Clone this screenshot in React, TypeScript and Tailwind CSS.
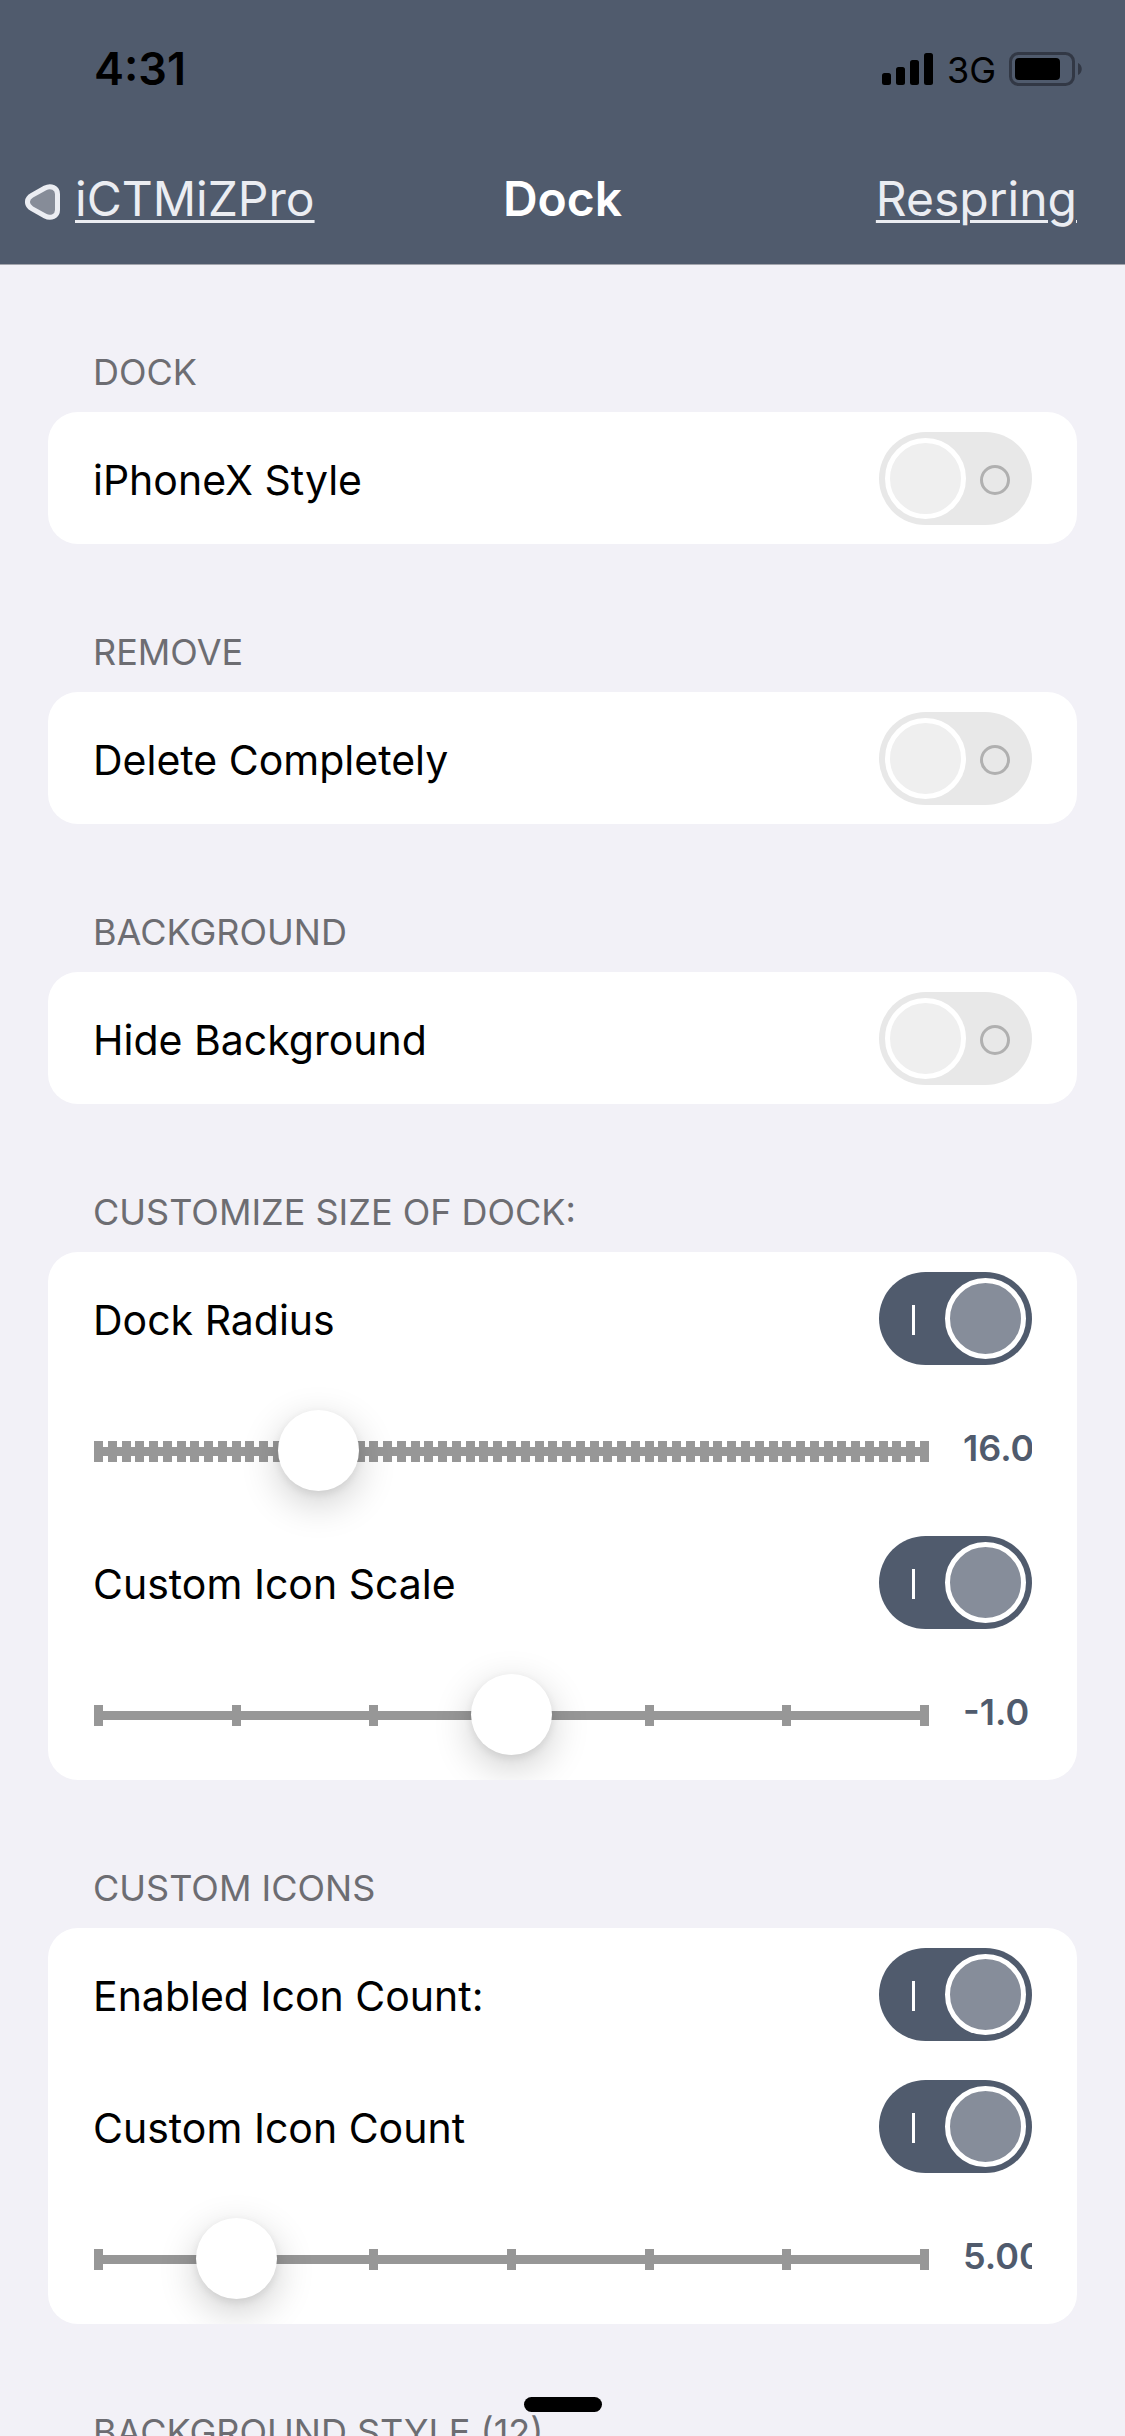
import { useId, useState } from 'react';
import type { ReactNode } from 'react';

function SignalIcon() {
  return (
    <svg width="52" height="34" viewBox="0 0 52 34" aria-hidden="true">
      <rect x="0" y="21" width="9" height="12" rx="2.5" />
      <rect x="14" y="15" width="9" height="18" rx="2.5" />
      <rect x="28" y="8" width="9" height="25" rx="2.5" />
      <rect x="42" y="1" width="9" height="32" rx="2.5" />
    </svg>
  );
}

function BatteryIcon() {
  return (
    <svg width="74" height="34" viewBox="0 0 74 34" aria-hidden="true">
      <rect x="1.5" y="1.5" width="63" height="31" rx="8" fill="none" stroke="#323845" strokeWidth="3" />
      <rect x="6" y="6" width="45" height="22" rx="4" />
      <path d="M69 11c5 2 5 10 0 12z" fill="#323845" />
    </svg>
  );
}

function BackIcon() {
  return (
    <svg width="35" height="36" viewBox="0 0 35 36" aria-hidden="true" className="mt-[6px]">
      <path
        d="M20 4 C26 0.8 32.5 4 32.5 10 V26 C32.5 32 26 35.2 20 32 L6.8 24.6 C1 21.3 1 14.7 6.8 11.4 Z"
        fill="#868c98"
        stroke="#ebedf2"
        strokeWidth="5"
        strokeLinejoin="round"
      />
    </svg>
  );
}

function Section({ title, children }: { title: string; children?: ReactNode }) {
  return (
    <section className="px-12">
      <h2 className="px-[45px] pt-[84px] pb-4 text-[36px] leading-[48px] text-[#6d6d72]">{title}</h2>
      {children && <div className="overflow-hidden rounded-[30px] bg-white">{children}</div>}
    </section>
  );
}

function SwitchRow({ label, on = false }: { label: string; on?: boolean }) {
  const id = useId();
  const [checked, setChecked] = useState(on);
  return (
    <div className="flex h-[132px] items-center justify-between px-[45px]">
      <label htmlFor={id} className="pt-[3px] text-[41px] leading-[48px] text-black">
        {label}
      </label>
      <span className="grid h-[93px] w-[153px] items-center">
        <input
          id={id}
          type="checkbox"
          role="switch"
          checked={checked}
          onChange={(e) => setChecked(e.target.checked)}
          className="peer col-start-1 row-start-1 h-full w-full cursor-pointer appearance-none rounded-full bg-[#e8e8e8] checked:bg-[#505b6d]"
        />
        {checked ? (
          <span className="pointer-events-none col-start-1 row-start-1 mt-[3px] ml-[33px] h-[30px] w-[3px] bg-white" />
        ) : (
          <span className="pointer-events-none col-start-1 row-start-1 mt-[3px] mr-[22px] size-[30px] justify-self-end rounded-full border-3 border-[#b0b0b0]" />
        )}
        <span className="pointer-events-none col-start-1 row-start-1 mx-[6px] size-[81px] rounded-full border-5 border-white bg-[#efefef] peer-checked:justify-self-end peer-checked:bg-[#868d9a]" />
      </span>
    </div>
  );
}

interface SliderProps {
  label: string;
  steps: number;
  initial: number;
  offset?: number;
  digits: number;
}

function SliderRow({ label, steps, initial, offset = 0, digits }: SliderProps) {
  const [value, setValue] = useState(initial);
  return (
    <div className="flex h-[132px] items-center justify-between gap-[34px] pr-[45px] pl-[46px]">
      <div className="grid flex-1 items-center">
        <div className="col-start-1 row-start-1 mt-[3px] flex h-[21px] items-center">
          <div className="grid w-full items-center">
            <div className="col-start-1 row-start-1 h-[9px] bg-[#979797]" />
            <div className="col-start-1 row-start-1 flex justify-between">
              {Array.from({ length: steps + 1 }, (_, i) => (
                <span key={i} className="h-[21px] w-[9px] bg-[#979797]" />
              ))}
            </div>
          </div>
        </div>
        <input
          type="range"
          aria-label={label}
          min={0}
          max={steps}
          step={1}
          value={value}
          onChange={(e) => setValue(Number(e.target.value))}
          className="z-10 col-start-1 row-start-1 -mx-9 h-[81px] cursor-pointer appearance-none bg-transparent [&::-webkit-slider-thumb]:size-[81px] [&::-webkit-slider-thumb]:appearance-none [&::-webkit-slider-thumb]:rounded-full [&::-webkit-slider-thumb]:bg-white [&::-webkit-slider-thumb]:shadow-[0_12px_39px_rgba(0,0,0,0.2),0_3px_9px_rgba(0,0,0,0.08)]"
        />
      </div>
      <output className="w-[69px] overflow-hidden pb-1 text-[36px] leading-[48px] font-semibold whitespace-nowrap text-[#505b6d]">
        {(value + offset).toFixed(digits)}
      </output>
    </div>
  );
}

export default function App() {
  return (
    <div className="relative flex h-screen flex-col overflow-hidden bg-[#f2f1f7] font-['Inter',sans-serif]">
      <header className="z-20 flex h-[264px] shrink-0 flex-col bg-[#505b6d] shadow-[0_1px_0_#a3a5ad]">
        <div className="flex h-[138px] items-center justify-between pr-[42px] pl-[94px] text-black">
          <time className="text-[45px] leading-[48px] font-semibold">4:31</time>
          <div className="flex items-center gap-[13px]">
            <SignalIcon />
            <span className="pt-[2px] text-[36px] leading-[48px]">3G</span>
            <BatteryIcon />
          </div>
        </div>
        <nav className="grid h-[122px] grid-cols-[1fr_auto_1fr] items-center px-12 text-[48px] leading-[60px] text-[#ebedf2]">
          <a href="#back" className="-ml-[23px] flex items-center gap-[15px]">
            <BackIcon />
            <span className="underline decoration-3 underline-offset-4">iCTMiZPro</span>
          </a>
          <h1 className="font-semibold text-white">Dock</h1>
          <button type="button" className="cursor-pointer justify-self-end underline decoration-3 underline-offset-4">
            Respring
          </button>
        </nav>
      </header>

      <main className="min-h-0 flex-1 overflow-y-auto [scrollbar-width:none]">
        <Section title="DOCK">
          <SwitchRow label="iPhoneX Style" />
        </Section>
        <Section title="REMOVE">
          <SwitchRow label="Delete Completely" />
        </Section>
        <Section title="BACKGROUND">
          <SwitchRow label="Hide Background" />
        </Section>
        <Section title="CUSTOMIZE SIZE OF DOCK:">
          <SwitchRow label="Dock Radius" on />
          <SliderRow label="Dock Radius value" steps={60} initial={16} digits={1} />
          <SwitchRow label="Custom Icon Scale" on />
          <SliderRow label="Custom Icon Scale value" steps={6} initial={3} offset={-4} digits={1} />
        </Section>
        <Section title="CUSTOM ICONS">
          <SwitchRow label="Enabled Icon Count:" on />
          <SwitchRow label="Custom Icon Count" on />
          <SliderRow label="Custom Icon Count value" steps={6} initial={1} offset={4} digits={2} />
        </Section>
        <Section title="BACKGROUND STYLE (12)" />
      </main>

      <div className="absolute bottom-6 left-1/2 z-30 h-[15px] w-[78px] -translate-x-1/2 rounded-full bg-black" />
    </div>
  );
}
